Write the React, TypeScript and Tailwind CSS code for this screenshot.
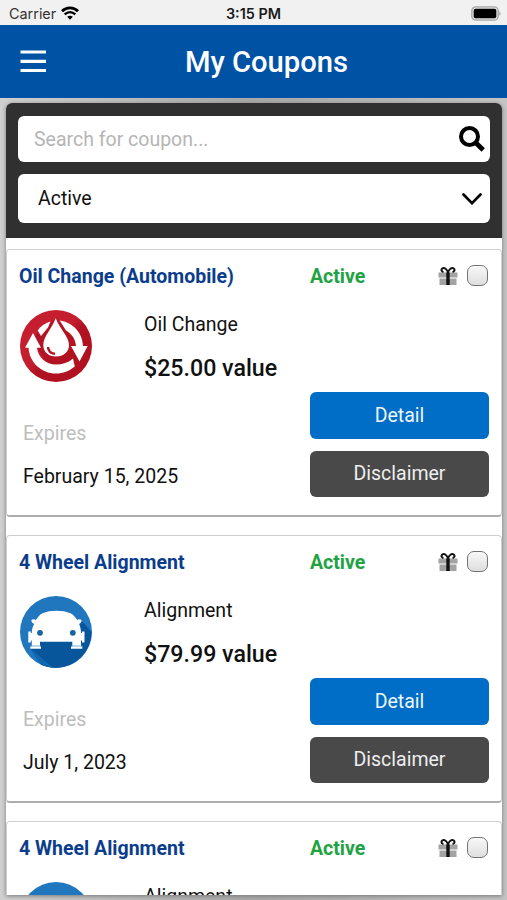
type Coupon = {
    id: number;
    title: string;
    service: string;
    value: string;
    expires: string;
    icon: 'oil' | 'car';
};

const coupons: Coupon[] = [
    { id: 1, title: 'Oil Change (Automobile)', service: 'Oil Change', value: '$25.00 value', expires: 'February 15, 2025', icon: 'oil' },
    { id: 2, title: '4 Wheel Alignment', service: 'Alignment', value: '$79.99 value', expires: 'July 1, 2023', icon: 'car' },
    { id: 3, title: '4 Wheel Alignment', service: 'Alignment', value: '$79.99 value', expires: 'July 1, 2023', icon: 'car' },
];

const WifiIcon = () => (
    <svg viewBox="0 0 18 14" className="w-[18px] h-[14px]" fill="none" stroke="#000">
        <path d="M1 5.2C5.5.8 12.500.8 17 5.200" strokeWidth="2.800" />
        <path d="M3.700 8.400c3.200-2.900 7.400-2.900 10.600 0" strokeWidth="2.500" />
        <path d="M9 13.700 6.200 10.800c1.500-1.500 4.100-1.500 5.600 0z" fill="#000" stroke="none" />
    </svg>
);

const BatteryIcon = () => (
    <svg viewBox="0 0 30 15" className="w-[30px] h-[15px]">
        <rect x="0.800" y="0.800" width="26.400" height="13.400" rx="4" fill="#e0e0e0" stroke="#a6a6a6" strokeWidth="1.300" />
        <rect x="2.700" y="2.700" width="22.600" height="9.600" rx="2" fill="#000" />
        <path d="M28.300 5.200c1.700.9 1.700 3.700 0 4.600z" fill="#a6a6a6" />
    </svg>
);

const MenuIcon = () => (
    <svg viewBox="0 0 26 24" className="w-[26px] h-6" fill="none" stroke="#fff" strokeWidth="3.200">
        <path d="M.5 2h26M.5 11.300h26M.5 20.500h26" />
    </svg>
);

const SearchIcon = () => (
    <svg viewBox="0 0 26 26" className="w-[26px] h-[26px]" fill="none" stroke="#000">
        <circle cx="10.500" cy="10.500" r="8.500" strokeWidth="4" />
        <path d="m16.500 16.500 7.700 7.500" strokeWidth="4.800" />
    </svg>
);

const OilIcon = () => (
    <svg viewBox="0 0 72 72" className="w-[72px] h-[72px]">
        <defs>
            <linearGradient id="oil" x1="0" y1="0" x2="1" y2="1">
                <stop offset="0.450" stopColor="#c51e2f" />
                <stop offset="0.550" stopColor="#b01222" />
            </linearGradient>
        </defs>
        <circle cx="36" cy="36" r="36" fill="url(#oil)" />
        <path d="M17.500 21 13 34 26 50 40 50 57 36 46 18 36 9z" fill="#b31424" />
        <path d="M17.700 20.500C20.500 16.500 25 13 30.500 11.500L28 17.500l-7 8.500z" fill="#fff" />
        <path d="M39.700 10.500C53 12.500 62.500 22.500 63 36h4.700L59.500 51.500 51 36h5C55.500 29 51.500 23.500 46 20.500z" fill="#fff" />
        <path d="M13 23 21 37.700H17C18 47.500 26 54.500 36 54.500c6.500 0 12.500-2 17-6l1.800 8C49.500 61 43 63.500 36 63.500 21.500 63.500 9.500 52.500 8.500 37.700H5z" fill="#fff" />
        <path d="M35.700 8.300C40.500 20 49 27 49 35c0 6.800-5.500 11.500-13 11.500S23.300 41.800 23.300 35C23.300 27 31 20 35.700 8.300z" fill="#fff" />
        <path d="M28 37c.3 4 3 6.500 7 6.800" fill="none" stroke="#b01222" strokeWidth="2.400" />
    </svg>
);

const CarIcon = () => (
    <svg viewBox="0 0 72 72" className="w-[72px] h-[72px]">
        <circle cx="36" cy="36" r="36" fill="#2077be" />
        <path d="M61 24 71.500 36A36 36 0 0 1 21 68.700L10.500 52.500 20 44 60 30z" fill="#07559b" />
        <path d="M10.500 52.500 21 68.500 33 71.800z" fill="#0f68b2" />
        <path
            d="M22.500 17.200c8-3.300 20-3.300 28 0 3 1.500 5 4 6.700 6.800 1-1.200 3-1 4-.3.800 1 .2 3.300-2.200 4.300 1.400 2.600 2 5.500 2 9H62v-1.500h2.500v11H62V44.500h-1v6h1.300v2.200H51v-2.200h1.300V45.700H20v4.800h1v2.200H10.300v-2.200h1.500v-6h-1v2H8.300v-11h2.500V37h1c0-3.500.8-6.400 2.400-9-2.400-1-3.400-3.300-2.500-4.300 1-.7 3.200-.8 4.300.3 1.700-2.800 3.500-5.300 6.500-6.800z"
            fill="#fff"
        />
        <path d="M10.500 50h10.500M51 50h11.500" stroke="#6ba5d1" strokeWidth="0.900" />
        <circle cx="20" cy="36.800" r="2.900" fill="#17649f" />
        <circle cx="52.800" cy="36.800" r="2.900" fill="#17649f" />
    </svg>
);

const GiftIcon = () => (
    <svg viewBox="0 0 20 18" className="w-5 h-[18px]">
        <path d="M.5 5.500h19v5H.5zM1.500 11.500h17V18h-17z" fill="#a3a3a3" />
        <path d="M8.300 5.500h3.400V18H8.300z" fill="#111" />
        <path d="M10 6.200C9.500 2 6 .2 4.300 1.500 2.700 3 3.500 4.700 5.500 5M10 6.200c.5-4.200 4-6 5.700-4.700C17.300 3 16.500 4.700 14.500 5" fill="none" stroke="#111" strokeWidth="1.900" />
    </svg>
);

const CouponCard = ({ coupon }: { coupon: Coupon }) => (
    <div className="h-[268px] shrink-0 rounded border border-[#cfcfcf] border-b-2 border-b-[#adadad] bg-white pl-[13px] pr-3">
        <div className="flex h-[52px] items-center">
            <h2 className="-ml-px w-[291px] pt-[2px] text-[19.5px] font-bold text-[#0b3d8c]">{coupon.title}</h2>
            <span className="flex-1 pt-[2px] text-[19.5px] font-bold text-[#22a343]">Active</span>
            <GiftIcon />
            <span className="mb-px ml-[9px] mr-px h-[21px] w-[21px] rounded-[7px] border-[1.5px] border-[#737373] bg-gradient-to-b from-[#f8f8f8] to-[#dedede]"></span>
        </div>

        <div className="flex pt-px">
            <div className="w-[290px]">
                <div className="flex pt-[7px]">
                    <div className="w-[124px]">
                        {coupon.icon === 'oil' ? <OilIcon /> : <CarIcon />}
                    </div>
                    <div className="whitespace-nowrap pt-px text-[#111]">
                        <p className="h-7 text-[19.5px] leading-7">{coupon.service}</p>
                        <p className="mt-[15px] h-7 text-[23.2px] font-medium leading-7">{coupon.value}</p>
                    </div>
                </div>
                <p className="mt-[38px] pl-[3px] text-[19.5px] leading-7 text-[#bdbdbd]">Expires</p>
                <p className="mt-[15px] pl-[3px] text-[19.5px] leading-7 text-[#111]">{coupon.expires}</p>
            </div>
            <div className="flex w-[179px] flex-col gap-3 pt-[89px]">
                <button className="h-[46.500px] rounded-md bg-[#006dc7] pt-px text-[19.5px] text-[#eef5fc]">Detail</button>
                <button className="h-[46.500px] rounded-md bg-[#494949] text-[19.5px] text-[#eee]">Disclaimer</button>
            </div>
        </div>
    </div>
);

const App = () => {
    return (
        <div className="flex h-[900px] w-[507px] flex-col overflow-hidden bg-[#bdbdbd] font-['Roboto',sans-serif]">
            {/* Status bar */}
            <div className="grid h-[25px] shrink-0 grid-cols-3 items-center bg-[#f1f1f1] pl-[9px] pr-[9px] pt-[2px] font-['Inter',sans-serif] text-[14.4px]">
                <div className="flex items-center gap-[5px] text-[#333]">
                    <span>Carrier</span>
                    <WifiIcon />
                </div>
                <span className="text-center font-semibold text-[#1a1a1a]">3:15 PM</span>
                <div className="-mr-[3px] flex justify-end">
                    <BatteryIcon />
                </div>
            </div>

            {/* Header */}
            <header className="flex h-[73px] shrink-0 items-center bg-[#0053a4] pl-5 text-white">
                <MenuIcon />
                <h1 className="flex-1 pr-[20px] pt-[2px] text-center text-[29.2px] font-medium">My Coupons</h1>
            </header>

            <main className="flex min-h-0 flex-1 bg-gradient-to-r from-[#d0d0d0] via-[#a8a8a8] to-[#c4c4c4] pb-[5px] pl-[6px] pr-[5px] pt-[5px]">
                <div className="flex flex-1 flex-col overflow-hidden rounded-t-md bg-white shadow-[0_1px_4px_#777]">
                    {/* Filters */}
                    <div className="flex h-[135px] shrink-0 flex-col gap-3 bg-[#303030] px-3 pt-[13px]">
                        <div className="flex h-[46px] items-center justify-between rounded-md bg-white pl-4 pr-[5px]">
                            <span className="pt-[2px] text-[19.5px] text-[#b5b5b5]">Search for coupon...</span>
                            <SearchIcon />
                        </div>
                        <div className="flex h-[49px] items-center justify-between rounded-md bg-white pl-5 pr-[8px]">
                            <span className="text-[19.5px] text-[#111]">Active</span>
                            <svg viewBox="0 0 20 12" className="h-3 w-5" fill="none" stroke="#000" strokeWidth="2.600" strokeLinecap="round">
                                <path d="m1.500 1.500 8.500 8.700 8.500-8.700" />
                            </svg>
                        </div>
                    </div>

                    {/* Coupon list */}
                    <div className="flex min-h-0 flex-1 flex-col gap-[18px] overflow-hidden pt-[11px]">
                        {coupons.map((coupon) => (
                            <CouponCard key={coupon.id} coupon={coupon} />
                        ))}
                    </div>
                </div>
            </main>
        </div>
    );
};

export default App;
